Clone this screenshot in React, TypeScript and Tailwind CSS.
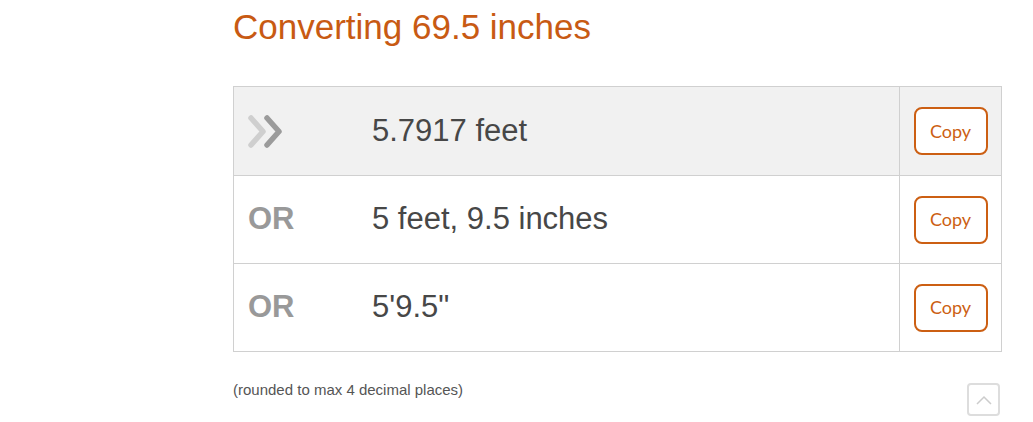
import React from 'react';

interface ResultRow {
  lead: 'arrow' | 'or';
  value: string;
  highlight?: boolean;
}

const rows: ResultRow[] = [
  { lead: 'arrow', value: '5.7917 feet', highlight: true },
  { lead: 'or', value: '5 feet, 9.5 inches' },
  { lead: 'or', value: '5\'9.5"' }
];

const DoubleChevron: React.FC = () => (
  <svg width="37" height="33" viewBox="0 0 37 33" fill="none">
    <path d="M3 3l12 13.5L3 30" stroke="#cfcfcf" strokeWidth="5.5" strokeLinecap="round" strokeLinejoin="round" />
    <path d="M19 3l12 13.5L19 30" stroke="#9b9b9b" strokeWidth="5.5" strokeLinecap="round" strokeLinejoin="round" />
  </svg>
);

const App: React.FC = () => {
  return (
    <div className="min-h-[422px] bg-white font-['Liberation_Sans',Arial,sans-serif]">
      <div className="ml-[233px] w-[769px] pt-[7px]">
        <h1 className="text-[35px] leading-[40px] text-[#c85a13]">Converting 69.5 inches</h1>

        <div className="mt-[39px] border border-[#d0d0d0]">
          {rows.map((row, i) => (
            <div
              key={i}
              className={`flex h-[88px] items-center ${i > 0 ? 'border-t border-[#d0d0d0]' : ''} ${
                row.highlight ? 'bg-[#f1f1f1]' : 'bg-white'
              }`}
            >
              <div className="flex w-[138px] items-center pl-[14px]">
                {row.lead === 'arrow' ? (
                  <DoubleChevron />
                ) : (
                  <span className="text-[31px] font-bold text-[#999999]">OR</span>
                )}
              </div>
              <div className="flex-1 text-[31px] text-[#474747]">{row.value}</div>
              <div className="flex h-full w-[102px] items-center justify-center border-l border-[#d0d0d0]">
                <button className="h-[48px] w-[74px] rounded-[8px] border-2 border-[#cc5f13] bg-white font-['Lato',sans-serif] text-[18px] text-[#cc5f13]">
                  Copy
                </button>
              </div>
            </div>
          ))}
        </div>

        <div className="flex items-start justify-between pt-[27px]">
          <p className="text-[15px] text-[#555555]">(rounded to max 4 decimal places)</p>
          <button className="mr-[2px] mt-[4px] flex h-[33px] w-[33px] items-center justify-center rounded-[4px] border-2 border-[#dddddd] bg-white">
            <svg width="18" height="12" viewBox="0 0 18 12" fill="none">
              <path d="M2 10l7-7 7 7" stroke="#cccccc" strokeWidth="1.5" />
            </svg>
          </button>
        </div>
      </div>
    </div>
  );
};

export default App;
